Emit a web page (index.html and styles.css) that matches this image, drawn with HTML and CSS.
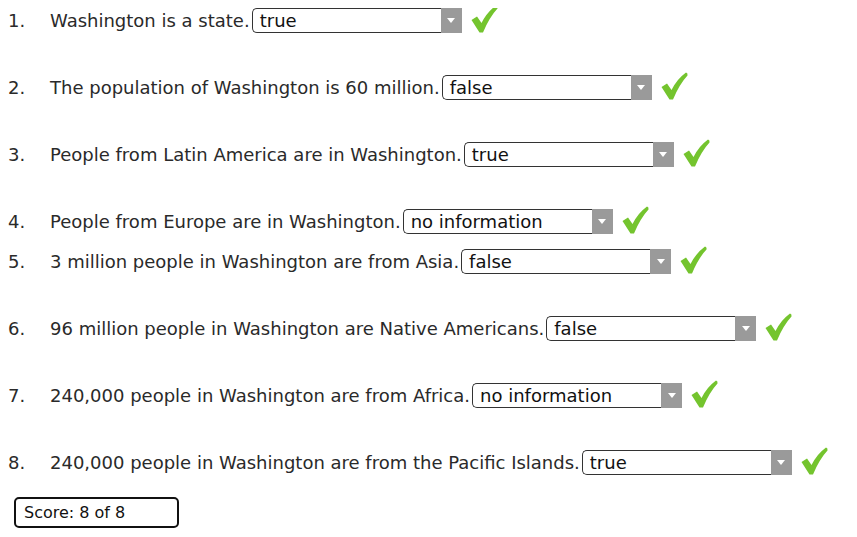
FILE: index.html
```html
<!DOCTYPE html>
<html>
<head>
<meta charset="utf-8">
<link rel="stylesheet" href="styles.css">
</head>
<body>
<div class="quiz">
  <div class="row">
    <span class="num">1.</span><span class="q">Washington is a state.</span>
    <span class="sel"><span class="val">true</span><span class="arrow"><svg width="8" height="5" viewBox="0 0 8 5"><path d="M0 0H8L4 5Z" fill="#fff"/></svg></span></span>
    <svg class="check" width="27" height="28" viewBox="0 0 27 28"><path d="M0.5 15 L6 11.5 L10.5 18 Q16 7 25 0.5 Q27 1 26.5 3.5 Q18.5 12 12 27.5 L8.5 27.5 Z" fill="#74c42e"/></svg>
  </div>
  <div class="row">
    <span class="num">2.</span><span class="q">The population of Washington is 60 million.</span>
    <span class="sel"><span class="val">false</span><span class="arrow"><svg width="8" height="5" viewBox="0 0 8 5"><path d="M0 0H8L4 5Z" fill="#fff"/></svg></span></span>
    <svg class="check" width="27" height="28" viewBox="0 0 27 28"><path d="M0.5 15 L6 11.5 L10.5 18 Q16 7 25 0.5 Q27 1 26.5 3.5 Q18.5 12 12 27.5 L8.5 27.5 Z" fill="#74c42e"/></svg>
  </div>
  <div class="row">
    <span class="num">3.</span><span class="q">People from Latin America are in Washington.</span>
    <span class="sel"><span class="val">true</span><span class="arrow"><svg width="8" height="5" viewBox="0 0 8 5"><path d="M0 0H8L4 5Z" fill="#fff"/></svg></span></span>
    <svg class="check" width="27" height="28" viewBox="0 0 27 28"><path d="M0.5 15 L6 11.5 L10.5 18 Q16 7 25 0.5 Q27 1 26.5 3.5 Q18.5 12 12 27.5 L8.5 27.5 Z" fill="#74c42e"/></svg>
  </div>
  <div class="row tight">
    <span class="num">4.</span><span class="q">People from Europe are in Washington.</span>
    <span class="sel"><span class="val">no information</span><span class="arrow"><svg width="8" height="5" viewBox="0 0 8 5"><path d="M0 0H8L4 5Z" fill="#fff"/></svg></span></span>
    <svg class="check" width="27" height="28" viewBox="0 0 27 28"><path d="M0.5 15 L6 11.5 L10.5 18 Q16 7 25 0.5 Q27 1 26.5 3.5 Q18.5 12 12 27.5 L8.5 27.5 Z" fill="#74c42e"/></svg>
  </div>
  <div class="row">
    <span class="num">5.</span><span class="q">3 million people in Washington are from Asia.</span>
    <span class="sel"><span class="val">false</span><span class="arrow"><svg width="8" height="5" viewBox="0 0 8 5"><path d="M0 0H8L4 5Z" fill="#fff"/></svg></span></span>
    <svg class="check" width="27" height="28" viewBox="0 0 27 28"><path d="M0.5 15 L6 11.5 L10.5 18 Q16 7 25 0.5 Q27 1 26.5 3.5 Q18.5 12 12 27.5 L8.5 27.5 Z" fill="#74c42e"/></svg>
  </div>
  <div class="row">
    <span class="num">6.</span><span class="q">96 million people in Washington are Native Americans.</span>
    <span class="sel"><span class="val">false</span><span class="arrow"><svg width="8" height="5" viewBox="0 0 8 5"><path d="M0 0H8L4 5Z" fill="#fff"/></svg></span></span>
    <svg class="check" width="27" height="28" viewBox="0 0 27 28"><path d="M0.5 15 L6 11.5 L10.5 18 Q16 7 25 0.5 Q27 1 26.5 3.5 Q18.5 12 12 27.5 L8.5 27.5 Z" fill="#74c42e"/></svg>
  </div>
  <div class="row">
    <span class="num">7.</span><span class="q">240,000 people in Washington are from Africa.</span>
    <span class="sel"><span class="val">no information</span><span class="arrow"><svg width="8" height="5" viewBox="0 0 8 5"><path d="M0 0H8L4 5Z" fill="#fff"/></svg></span></span>
    <svg class="check" width="27" height="28" viewBox="0 0 27 28"><path d="M0.5 15 L6 11.5 L10.5 18 Q16 7 25 0.5 Q27 1 26.5 3.5 Q18.5 12 12 27.5 L8.5 27.5 Z" fill="#74c42e"/></svg>
  </div>
  <div class="row last">
    <span class="num">8.</span><span class="q">240,000 people in Washington are from the Pacific Islands.</span>
    <span class="sel"><span class="val">true</span><span class="arrow"><svg width="8" height="5" viewBox="0 0 8 5"><path d="M0 0H8L4 5Z" fill="#fff"/></svg></span></span>
    <svg class="check" width="27" height="28" viewBox="0 0 27 28"><path d="M0.5 15 L6 11.5 L10.5 18 Q16 7 25 0.5 Q27 1 26.5 3.5 Q18.5 12 12 27.5 L8.5 27.5 Z" fill="#74c42e"/></svg>
  </div>
  <div class="score">Score: 8 of 8</div>
</div>
</body>
</html>
```
FILE: styles.css
```css
body {
  margin: 8px;
  background: #fff;
  font-family: "DejaVu Sans", Verdana, sans-serif;
  font-size: 18px;
  color: #2a2a2a;
}
.quiz {
  display: flex;
  flex-direction: column;
  align-items: flex-start;
}
.row {
  display: flex;
  align-items: center;
  height: 25px;
  margin-bottom: 42px;
}
.row.tight { margin-bottom: 15px; }
.row.last { margin-bottom: 22px; }
.num {
  width: 42px;
  flex: none;
}
.q { white-space: nowrap; }
.sel {
  display: flex;
  align-items: stretch;
  box-sizing: border-box;
  width: 210px;
  height: 25px;
  border: 1px solid #333;
  border-right: none;
  border-radius: 5px 0 0 5px;
  margin-left: 2px;
}
.val {
  flex: 1;
  padding-left: 7px;
  line-height: 23px;
  color: #111;
}
.arrow {
  width: 21px;
  margin: -1px 0;
  background: #9a9a9a;
  display: flex;
  align-items: center;
  justify-content: center;
}
.check { margin-left: 9px; margin-top: -4px; }
.score {
  margin-left: 6px;
  box-sizing: border-box;
  width: 165px;
  height: 31px;
  border: 2px solid #111;
  border-radius: 5px;
  padding-left: 8px;
  font-size: 16px;
  line-height: 27px;
  color: #111;
}
```
